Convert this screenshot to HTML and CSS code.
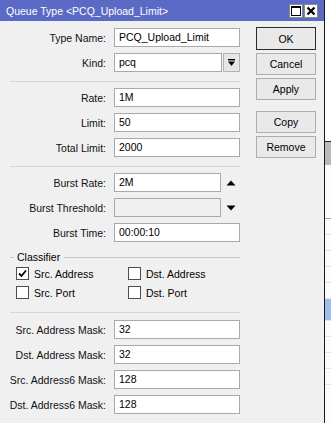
FILE: index.html
```html
<!DOCTYPE html>
<html lang="en">
<head>
  <meta charset="UTF-8">
  <meta name="viewport" content="width=device-width, initial-scale=1.0">
  <title>Queue Type &lt;PCQ_Upload_Limit&gt;</title>
  <link rel="stylesheet" href="styles.css">
</head>
<body>
  <div class="screen">
    <div class="window">
      <div class="titlebar">
        <span class="title">Queue Type &lt;PCQ_Upload_Limit&gt;</span>
        <div class="tb-btns">
          <span class="tb-btn">
            <svg width="12" height="12" viewBox="0 0 12 12"><rect x="1.5" y="1.5" width="9" height="9" fill="none" stroke="#000" stroke-width="1"/><line x1="1" y1="2.5" x2="11" y2="2.5" stroke="#000" stroke-width="1"/></svg>
          </span>
          <span class="tb-btn">
            <svg width="12" height="12" viewBox="0 0 12 12"><path d="M2.5 2.5 L9.5 9.5 M9.5 2.5 L2.5 9.5" stroke="#000" stroke-width="2.2"/></svg>
          </span>
        </div>
      </div>

      <div class="content">
        <div class="form">
          <div class="group">
            <div class="row"><span class="label">Type Name:</span><div class="field">PCQ_Upload_Limit</div></div>
            <div class="row">
              <span class="label">Kind:</span>
              <div class="field short">pcq</div>
              <span class="drop">
                <svg width="9" height="9" viewBox="0 0 9 9"><rect x="1" y="1" width="7" height="1.4" fill="#000"/><path d="M1 3.5 H8 L4.5 8 Z" fill="#000"/></svg>
              </span>
            </div>
          </div>

          <div class="sep"></div>

          <div class="group">
            <div class="row"><span class="label">Rate:</span><div class="field">1M</div></div>
            <div class="row"><span class="label">Limit:</span><div class="field">50</div></div>
            <div class="row"><span class="label">Total Limit:</span><div class="field">2000</div></div>
          </div>

          <div class="sep"></div>

          <div class="group">
            <div class="row">
              <span class="label">Burst Rate:</span>
              <div class="field short">2M</div>
              <span class="arrow"><svg width="10" height="6" viewBox="0 0 10 6"><path d="M0.5 5.5 L5 0.5 L9.5 5.5 Z" fill="#000"/></svg></span>
            </div>
            <div class="row">
              <span class="label">Burst Threshold:</span>
              <div class="field short disabled"></div>
              <span class="arrow"><svg width="10" height="6" viewBox="0 0 10 6"><path d="M0.5 0.5 L9.5 0.5 L5 5.5 Z" fill="#000"/></svg></span>
            </div>
            <div class="row"><span class="label">Burst Time:</span><div class="field">00:00:10</div></div>
          </div>

          <div class="legend"><span class="legend-text">Classifier</span></div>
          <div class="checks">
            <div class="check"><span class="box"><svg width="11" height="11" viewBox="0 0 11 11"><path d="M2 5.5 L4.5 8 L9 2.5" fill="none" stroke="#000" stroke-width="1.8"/></svg></span>Src. Address</div>
            <div class="check"><span class="box"></span>Dst. Address</div>
            <div class="check"><span class="box"></span>Src. Port</div>
            <div class="check"><span class="box"></span>Dst. Port</div>
          </div>

          <div class="sep last"></div>

          <div class="group">
            <div class="row"><span class="label">Src. Address Mask:</span><div class="field">32</div></div>
            <div class="row"><span class="label">Dst. Address Mask:</span><div class="field">32</div></div>
            <div class="row"><span class="label">Src. Address6 Mask:</span><div class="field">128</div></div>
            <div class="row"><span class="label">Dst. Address6 Mask:</span><div class="field">128</div></div>
          </div>
        </div>

        <div class="actions">
          <button class="btn default">OK</button>
          <button class="btn">Cancel</button>
          <button class="btn">Apply</button>
          <button class="btn spaced">Copy</button>
          <button class="btn">Remove</button>
        </div>
      </div>
    </div>

    <!-- the list window behind the dialog -->
    <div class="behind">
      <div class="bh-top"></div>
      <div class="bh-head"></div>
      <div class="bh-rows">
        <div class="bh-row tall"></div>
        <div class="bh-row"></div>
        <div class="bh-row"></div>
        <div class="bh-row"></div>
        <div class="bh-row"></div>
        <div class="bh-row"></div>
        <div class="bh-row sel"></div>
        <div class="bh-row"></div>
        <div class="bh-row"></div>
        <div class="bh-row"></div>
        <div class="bh-row"></div>
      </div>
    </div>
  </div>
</body>
</html>
```

FILE: styles.css
```css
body {
  margin: 0;
  padding: 0;
  overflow: hidden;
  font-family: "Liberation Sans", Arial, sans-serif;
  font-size: 10.5px;
  color: #000;
  background: #fff;
}
.screen {
  display: flex;
  height: 423px;
}
.window {
  width: 324px;
  flex: none;
  background: #f0f0f0;
  border-right: 1px solid #1a1a1a;
}
.titlebar {
  height: 21px;
  background: #5b6ac4;
  display: flex;
  align-items: center;
  justify-content: space-between;
  padding: 0 6px 0 6px;
}
.title {
  color: #fff;
  font-size: 10.5px;
}
.tb-btns {
  display: flex;
  gap: 1px;
}
.tb-btn {
  width: 14px;
  height: 14px;
  box-sizing: border-box;
  background: #fff;
  border: 1px solid #8a8a8a;
  display: flex;
  align-items: center;
  justify-content: center;
}
.content {
  display: flex;
}
.form {
  width: 240px;
  padding-top: 7px;
}
.group {
  display: flex;
  flex-direction: column;
  gap: 6px;
}
.row {
  display: flex;
  align-items: center;
  height: 19px;
}
.label {
  width: 106px;
  flex: none;
  display: flex;
  justify-content: flex-end;
  white-space: nowrap;
  margin-right: 8px;
  color: #111;
}
.field {
  width: 126px;
  height: 19px;
  box-sizing: border-box;
  border: 1px solid #a9a9a9;
  background: #fff;
  padding: 0 4px;
  line-height: 17px;
  white-space: nowrap;
}
.field.short {
  width: 108px;
}
.field.disabled {
  background: #f0f0f0;
}
.drop {
  width: 17px;
  height: 19px;
  box-sizing: border-box;
  margin-left: 1px;
  border: 1px solid #b4b4b4;
  background: #e6e6e6;
  display: flex;
  align-items: center;
  justify-content: center;
}
.arrow {
  width: 18px;
  display: flex;
  justify-content: center;
  margin-left: 1px;
}
.sep {
  height: 1px;
  background: #d6d6d6;
  margin: 9px 0 6px 10px;
}
.sep.last {
  margin: 10px 0 7px 10px;
}
.legend {
  display: flex;
  align-items: center;
  height: 14px;
  margin: 8px 0 0 10px;
}
.legend::before,
.legend::after {
  content: "";
  height: 1px;
  background: #c8c8c8;
}
.legend::before {
  width: 4px;
}
.legend::after {
  flex: 1;
}
.legend-text {
  padding: 0 4px 0 3px;
}
.checks {
  display: grid;
  grid-template-columns: 112px 112px;
  padding-left: 16px;
}
.check {
  display: flex;
  align-items: center;
  height: 19px;
}
.box {
  width: 13px;
  height: 13px;
  box-sizing: border-box;
  border: 1px solid #4d4d4d;
  background: #fff;
  margin-right: 5px;
  display: flex;
  align-items: center;
  justify-content: center;
}
.actions {
  margin-left: 16px;
  width: 60px;
  padding-top: 6px;
  display: flex;
  flex-direction: column;
  gap: 3px;
}
.btn {
  height: 22px;
  box-sizing: border-box;
  padding: 0;
  border: 1px solid #adadad;
  background: #e9e9e9;
  font-family: "Liberation Sans", Arial, sans-serif;
  font-size: 10.5px;
  color: #000;
}
.btn.default {
  height: 23px;
  border: 1px solid #2b2b2b;
}
.btn.spaced {
  margin-top: 8px;
}
.behind {
  flex: 1;
  display: flex;
  flex-direction: column;
}
.bh-top {
  height: 141px;
  background: #fff;
  border-bottom: 1px solid #222;
}
.bh-head {
  height: 23px;
  background: #b9b9b9;
}
.bh-rows {
  flex: 1;
  background: #fcfcfc;
}
.bh-row {
  height: 15px;
  border-bottom: 1px solid #e4e4e4;
}
.bh-row.tall {
  height: 53px;
  border-bottom: 1px solid #a8a8a8;
}
.bh-row.sel {
  height: 21px;
  background: #9fc0ec;
}
```
